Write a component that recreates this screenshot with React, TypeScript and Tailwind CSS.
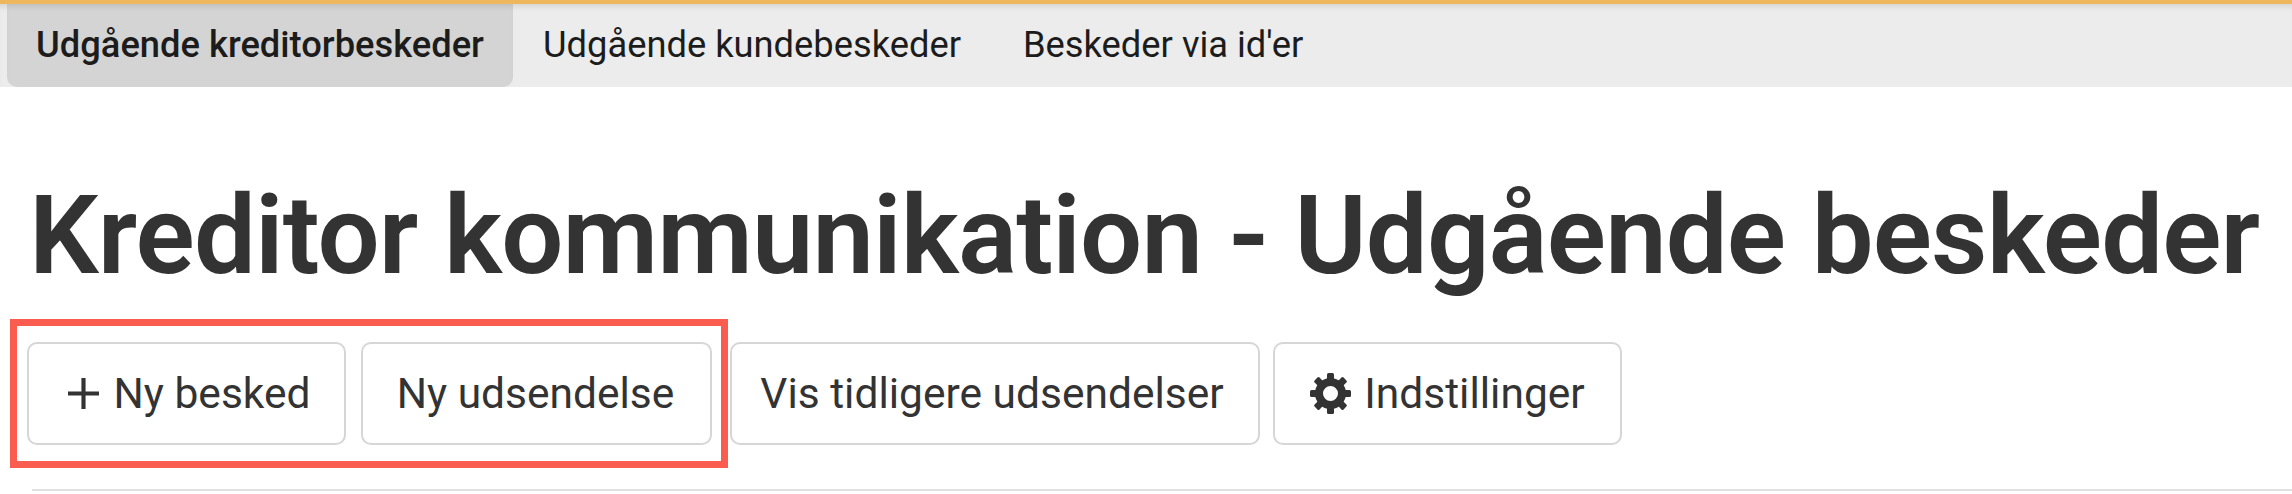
const buttonClass =
  'flex h-[103px] items-center justify-center rounded-[10px] border-2 border-[#d6d6d6] bg-white text-[42.5px] text-[#333333]'

const teeth = [0, 45, 90, 135, 180, 225, 270, 315]

function GearIcon() {
  return (
    <svg width="41" height="41" viewBox="0 0 41 41" className="fill-[#333333]">
      <path
        fillRule="evenodd"
        d="M20.500 5a15.500 15.500 0 1 0 0 31a15.500 15.500 0 1 0 0-31zM20.500 13a7.500 7.500 0 1 1 0 15a7.500 7.500 0 1 1 0-15z"
      />
      {teeth.map((deg) => (
        <rect key={deg} x="17" y="0" width="7" height="8" rx="1.500" transform={`rotate(${deg} 20.500 20.500)`} />
      ))}
    </svg>
  )
}

export default function App() {
  return (
    <div className="relative h-[494px] w-[2292px] overflow-hidden bg-white font-['Roboto',sans-serif]">
      <div className="h-[4px] bg-[#eeb75c]" />
      <nav className="flex h-[83px] items-stretch bg-[#ececec] pl-[7px] text-[36.3px] text-[#1c1c1c] shadow-[inset_0_6px_6px_-4px_rgba(0,0,0,0.12)]">
        <a className="flex w-[506px] items-center justify-center rounded-b-[10px] bg-[#d4d4d4] font-medium shadow-[inset_0_6px_6px_-4px_rgba(0,0,0,0.12)]">
          Udgående kreditorbeskeder
        </a>
        <a className="ml-[30px] flex items-center">Udgående kundebeskeder</a>
        <a className="ml-[62px] flex items-center">Beskeder via id'er</a>
      </nav>
      <main className="pl-[27px]">
        <h1 className="mt-[89px] ml-[2px] text-[110px] leading-[119px] font-semibold tracking-[-0.86px] whitespace-nowrap text-[#333333]">
          Kreditor kommunikation - Udgående beskeder
        </h1>
        <div className="mt-[47px] flex">
          <button className={`${buttonClass} w-[319px] gap-[15px] pl-[5px]`}>
            <svg width="31" height="31" viewBox="0 0 33 33" className="fill-[#333333]">
              <path d="M14.300 0h4.400v14.300h14.300v4.400H18.700v14.300h-4.400V18.700H0v-4.400h14.300z" />
            </svg>
            Ny besked
          </button>
          <button className={`${buttonClass} ml-[15px] w-[351px] pr-[2px]`}>Ny udsendelse</button>
          <button className={`${buttonClass} ml-[18px] w-[530px] pr-[6px]`}>Vis tidligere udsendelser</button>
          <button className={`${buttonClass} ml-[13px] w-[349px] gap-[13px]`}>
            <GearIcon />
            Indstillinger
          </button>
        </div>
        <hr className="mt-[44px] ml-[5px] border-t-2 border-[#e0e0e0]" />
      </main>
      {/* red highlight drawn over the first two buttons */}
      <div className="absolute left-[10px] top-[319px] h-[149px] w-[718px] border-[7px] border-[#fa5c50]" />
    </div>
  )
}
